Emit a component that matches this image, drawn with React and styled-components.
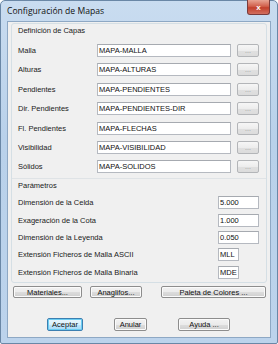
import React from 'react';
import styled, { createGlobalStyle } from 'styled-components';

const GlobalStyle = createGlobalStyle`
  html, body {
    margin: 0;
    padding: 0;
    background: #ffffff;
  }
  body {
    font-family: "Liberation Sans", Arial, sans-serif;
  }
`;

const Window = styled.div`
  box-sizing: border-box;
  width: 278px;
  height: 344px;
  display: flex;
  flex-direction: column;
  border: 1px solid #6a87a6;
  border-radius: 5px 5px 2px 2px;
  background: linear-gradient(#c9dcf0, #b9d1ea 40%, #bcd3ec);
  padding: 0 6px 5px 6px;
`;

const TitleBar = styled.div`
  height: 20px;
  display: flex;
  align-items: flex-start;
  justify-content: space-between;
`;

const Title = styled.div`
  font-family: "Open Sans", "Noto Sans", sans-serif;
  font-size: 8.6px;
  color: #111111;
  margin-top: 4px;
`;

const CloseButton = styled.div`
  width: 23px;
  height: 15px;
  margin-top: -1px;
  margin-right: 1px;
  box-sizing: border-box;
  border: 1px solid #7a3b3b;
  border-top: none;
  border-radius: 0 0 3px 3px;
  background: linear-gradient(#e8a493, #d1604c 45%, #c2402c 55%, #d27060);
  display: flex;
  align-items: center;
  justify-content: center;
  color: #ffffff;
  font-size: 8px;
  font-weight: bold;
`;

const Client = styled.div`
  flex: 1;
  box-sizing: border-box;
  background: #f0f0f0;
  border: 1px solid #8ea8c4;
  padding: 1px 3px 0 3px;
  display: flex;
  flex-direction: column;
`;

const Group = styled.div`
  box-sizing: border-box;
  border: 1px solid #d5dfe5;
  border-radius: 3px;
  height: 260px;
  display: flex;
  flex-direction: column;
`;

const SectionTitle = styled.div`
  font-size: 7.5px;
  color: #1a1a1a;
  padding: 2px 0 0 6px;
  height: 10px;
`;

const Separator = styled.div`
  border-top: 1px solid #dfe3e6;
  margin-top: ${(p) => p.$top}px;
`;

const LayerGrid = styled.div`
  display: grid;
  grid-template-columns: 1fr 134px 22px;
  column-gap: 6px;
  row-gap: 6.4px;
  padding: 8px 7px 0 6px;
  align-items: center;
`;

const ParamGrid = styled.div`
  display: grid;
  grid-template-columns: 1fr auto;
  row-gap: 4.3px;
  padding: 5px 7px 0 6px;
  align-items: center;
`;

const Label = styled.div`
  font-size: 7.5px;
  color: #1a1a1a;
  white-space: nowrap;
`;

const Field = styled.div`
  box-sizing: border-box;
  height: 13px;
  width: ${(p) => (p.$width ? `${p.$width}px` : 'auto')};
  background: #ffffff;
  border: 1px solid #b5b9c0;
  border-top-color: #a6aab0;
  font-size: 7.5px;
  color: #111111;
  padding-left: 1px;
  display: flex;
  align-items: center;
  white-space: nowrap;
  overflow: hidden;
`;

const DotsButton = styled.div`
  box-sizing: border-box;
  height: 13px;
  border: 1px solid #b3b5b8;
  border-radius: 2px;
  background: linear-gradient(#f6f6f6, #ededed 50%, #e0e0e0 51%, #dcdcdc);
  font-size: 7px;
  color: #9a9a9a;
  display: flex;
  align-items: center;
  justify-content: center;
  line-height: 1;
`;

const ButtonRow = styled.div`
  display: flex;
  gap: ${(p) => p.$gap}px;
  padding: ${(p) => p.$pad};
`;

const Button = styled.div`
  box-sizing: border-box;
  width: ${(p) => p.$width}px;
  height: ${(p) => p.$height || 12}px;
  margin-left: ${(p) => p.$push || 0}px;
  border: 1px solid ${(p) => (p.$focus ? '#3c7fb1' : '#8d8d8d')};
  border-radius: 2px;
  background: ${(p) =>
    p.$focus
      ? 'linear-gradient(#eaf6fd, #d9f0fc 50%, #bee6fd 51%, #a7d9f5)'
      : 'linear-gradient(#f2f2f2, #ebebeb 50%, #dddddd 51%, #cfcfcf)'};
  box-shadow: inset 0 0 0 1px ${(p) => (p.$focus ? '#6ccdf2' : '#fbfbfb')};
  font-size: 7.5px;
  color: #111111;
  display: flex;
  align-items: center;
  justify-content: center;
  white-space: nowrap;
`;

const layers = [
  ['Malla', 'MAPA-MALLA'],
  ['Alturas', 'MAPA-ALTURAS'],
  ['Pendientes', 'MAPA-PENDIENTES'],
  ['Dir. Pendientes', 'MAPA-PENDIENTES-DIR'],
  ['Fl. Pendientes', 'MAPA-FLECHAS'],
  ['Visibilidad', 'MAPA-VISIBILIDAD'],
  ['Sólidos', 'MAPA-SOLIDOS'],
];

const params = [
  ['Dimensión de la Celda', '5.000', 41],
  ['Exageración de la Cota', '1.000', 41],
  ['Dimensión de la Leyenda', '0.050', 41],
  ['Extensión Ficheros de Malla ASCII', 'MLL', 21],
  ['Extensión Ficheros de Malla Binaria', 'MDE', 21],
];

const App = () => {
  return (
    <>
      <GlobalStyle />
      <Window>
        <TitleBar>
          <Title>Configuración de Mapas</Title>
          <CloseButton>x</CloseButton>
        </TitleBar>
        <Client>
          <Group>
            <SectionTitle>Definición de Capas</SectionTitle>
            <LayerGrid>
              {layers.map(([name, value]) => (
                <React.Fragment key={name}>
                  <Label>{name}</Label>
                  <Field>{value}</Field>
                  <DotsButton>...</DotsButton>
                </React.Fragment>
              ))}
            </LayerGrid>
            <Separator $top={5} />
            <SectionTitle>Parámetros</SectionTitle>
            <ParamGrid>
              {params.map(([name, value, w]) => (
                <React.Fragment key={name}>
                  <Label>{name}</Label>
                  <Field $width={w}>{value}</Field>
                </React.Fragment>
              ))}
            </ParamGrid>
          </Group>
          <ButtonRow $pad="3px 0 0 2px" $gap={8}>
            <Button $width={69}>Materiales...</Button>
            <Button $width={52}>Anaglifos...</Button>
            <Button $width={105} $push={11}>
              Paleta de Colores ...
            </Button>
          </ButtonRow>
          <ButtonRow $pad="20px 0 0 36px" $gap={31}>
            <Button $width={36} $height={13} $focus>
              Aceptar
            </Button>
            <Button $width={33} $height={13}>
              Anular
            </Button>
            <Button $width={52} $height={13}>
              Ayuda ...
            </Button>
          </ButtonRow>
        </Client>
      </Window>
    </>
  );
};

export default App;
